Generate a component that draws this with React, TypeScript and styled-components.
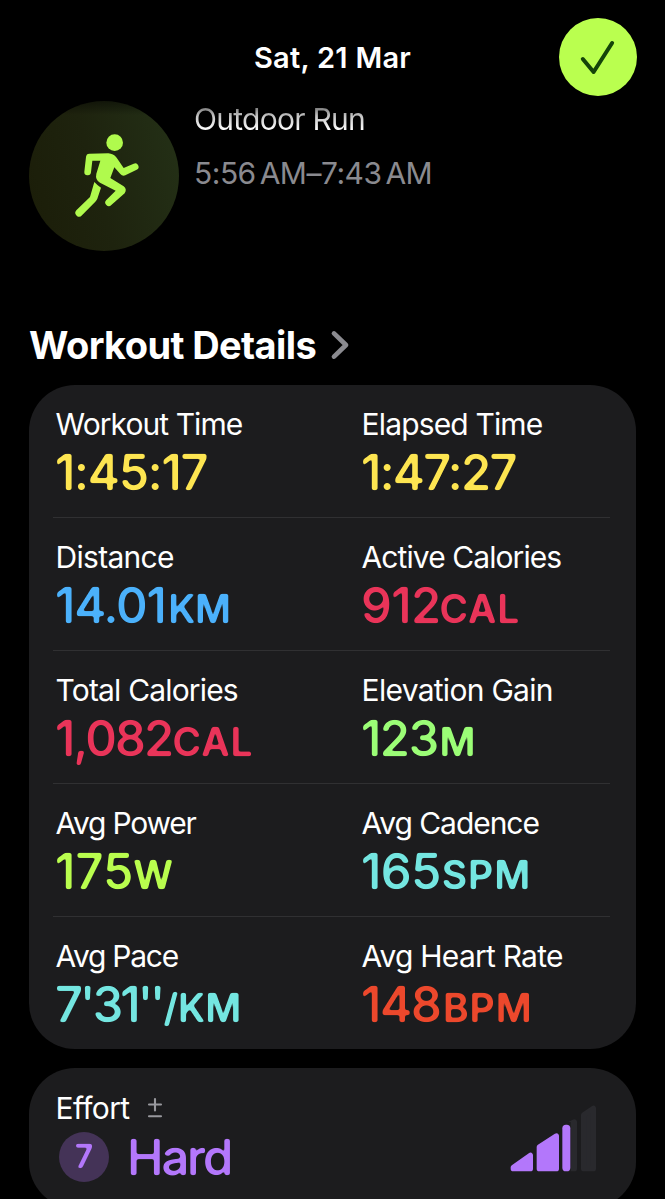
import React from "react";
import styled, { createGlobalStyle } from "styled-components";

const GlobalStyle = createGlobalStyle`
  * { box-sizing: border-box; }
  html, body { margin: 0; background: #000; }
  body {
    height: 1199px;
    overflow: hidden;
    font-family: Inter, "Liberation Sans", sans-serif;
    color: #fff;
    -webkit-font-smoothing: antialiased;
  }
`;

const Screen = styled.main`
  width: 665px;
  height: 1199px;
  overflow: hidden;
  background: #000;
`;

const Header = styled.header`
  display: grid;
  grid-template-columns: 78px 1fr 78px;
  align-items: center;
  height: 96px;
  padding: 18px 28px 0;
`;

const HeaderDate = styled.h1`
  grid-column: 2;
  margin: 1px 0 0;
  text-align: center;
  font-size: 29px;
  font-weight: 600;
  line-height: 36px;
  letter-spacing: 0.27px;
`;

const DoneButton = styled.button`
  display: block;
  width: 78px;
  height: 78px;
  padding: 0;
  border: 0;
  border-radius: 50%;
  background: #baff4f;
`;

const Drawing = styled.svg`
  display: block;
  flex: none;
`;

const Summary = styled.section`
  display: flex;
  gap: 15px;
  padding: 4.5px 29px 0;
`;

const ActivityBadge = styled.div`
  width: 150px;
  height: 150px;
  border-radius: 50%;
  background:
    linear-gradient(180deg, rgba(0, 0, 0, 0.45), rgba(0, 0, 0, 0) 14px),
    linear-gradient(75deg, #1b1d08 0%, #1e230e 45%, #243117 100%);
`;

const SummaryText = styled.div`
  display: flex;
  flex-direction: column;
  gap: 18px;
  font-size: 30px;
  line-height: 36px;
`;

const ActivityName = styled.div`
  align-self: flex-start;
  letter-spacing: -0.73px;
  color: transparent;
  background: linear-gradient(180deg, #777 6px, #c4c4c4 15px, #fff 29px);
  -webkit-background-clip: text;
  background-clip: text;
`;

const ActivityHours = styled.div`
  letter-spacing: -0.5px;
  word-spacing: -4px;
  color: #8a8a8f;
`;

const SectionTitle = styled.h2`
  display: flex;
  align-items: center;
  gap: 14px;
  margin: 71.5px 29px 17px;
  font-size: 38px;
  font-weight: 700;
  line-height: 46px;
  letter-spacing: -0.6px;
`;

const Card = styled.section`
  margin: 0 29px 19px;
  border-radius: 46px;
  background: #1c1c1e;
`;

const MetricsCard = styled(Card)`
  height: 664px;
  padding: 0 26px 0 24px;
`;

const MetricRow = styled.div`
  display: grid;
  grid-template-columns: 306px 1fr;
  height: 133px;
  padding: 21px 0 0 2px;
  border-bottom: 1px solid #303032;
  &:last-child { border-bottom: 0; }
`;

const Label = styled.div<{ $track: number }>`
  padding-left: 0.6px;
  font-size: 30px;
  line-height: 36px;
  white-space: nowrap;
  letter-spacing: ${(p) => p.$track + 0.06}px;
`;

const Value = styled.div<{ $color: string; $track: number }>`
  display: flex;
  align-items: baseline;
  height: 61px;
  padding-top: 1px;
  font-size: 49px;
  font-weight: 500;
  line-height: 60px;
  white-space: nowrap;
  color: ${(p) => p.$color};
  letter-spacing: ${(p) => p.$track}px;
  filter: url(#rounded);
`;

const Unit = styled.span<{ $track: number; $offset: number }>`
  margin-left: ${(p) => p.$offset}px;
  font-size: 39px;
  font-weight: 600;
  line-height: 1;
  letter-spacing: ${(p) => p.$track}px;
`;

const EffortCard = styled(Card)`
  display: flex;
  justify-content: space-between;
  align-items: flex-start;
  height: 140px;
  padding: 22px 39px 0 26px;
`;

const EffortHeading = styled.div`
  display: flex;
  align-items: center;
  gap: 18px;
`;

const EffortLevel = styled.div`
  display: flex;
  align-items: flex-start;
  gap: 18px;
  padding: 1px 0 0 4px;
`;

const Score = styled.div`
  display: grid;
  place-items: center;
  width: 50px;
  height: 50px;
  margin-top: 5px;
  border-radius: 50%;
  background: #443357;
  color: #b377fb;
  font-size: 32px;
  font-weight: 600;
  line-height: 50px;
`;

const ScoreDigit = styled.span`
  filter: url(#rounded);
`;

const EffortChart = styled.div`
  padding-top: 13.5px;
`;

type Metric = {
  label: string;
  labelTrack: number;
  value: string;
  track: number;
  color: string;
  unit?: string;
  unitTrack?: number;
  unitOffset?: number;
};

const rows: Metric[][] = [
  [
    { label: "Workout Time", labelTrack: -1.0, value: "1:45:17", track: -1.22, color: "#fde551" },
    { label: "Elapsed Time", labelTrack: -0.91, value: "1:47:27", track: -1.71, color: "#fde551" },
  ],
  [
    { label: "Distance", labelTrack: -0.77, value: "14.01", track: -1.13, color: "#4bb1fb", unit: "KM", unitTrack: -0.6, unitOffset: 2.6 },
    { label: "Active Calories", labelTrack: -0.98, value: "912", track: -0.6, color: "#e93459", unit: "CAL", unitTrack: 0.9, unitOffset: -1.2 },
  ],
  [
    { label: "Total Calories", labelTrack: -0.89, value: "1,082", track: -1.84, color: "#e93459", unit: "CAL", unitTrack: 0.9, unitOffset: 0.2 },
    { label: "Elevation Gain", labelTrack: -0.78, value: "123", track: -1.52, color: "#9bfd76", unit: "M", unitTrack: 0, unitOffset: 1.8 },
  ],
  [
    { label: "Avg Power", labelTrack: -1.28, value: "175", track: 0.07, color: "#b9fd4e", unit: "W", unitTrack: 0, unitOffset: 0 },
    { label: "Avg Cadence", labelTrack: -1.1, value: "165", track: -0.6, color: "#74e6e1", unit: "SPM", unitTrack: 0.99, unitOffset: 1 },
  ],
  [
    { label: "Avg Pace", labelTrack: -1.32, value: "7'31''", track: -2.94, color: "#74e6e1", unit: "/KM", unitTrack: -0.2, unitOffset: 1 },
    { label: "Avg Heart Rate", labelTrack: -0.82, value: "148", track: -1.25, color: "#ec482c", unit: "BPM", unitTrack: 0.9, unitOffset: 2.4 },
  ],
];

/* Softens the corners of letters and digits into rounded stroke ends. */
const RoundedFilter = () => (
  <svg width="0" height="0" style={{ display: "block" }} aria-hidden="true">
    <filter id="rounded" x="-5%" y="-5%" width="110%" height="110%" colorInterpolationFilters="sRGB">
      <feGaussianBlur stdDeviation="1.15" />
      <feComponentTransfer>
        <feFuncA type="linear" slope="3.2" intercept="-0.95" />
      </feComponentTransfer>
    </filter>
  </svg>
);

const CheckIcon = () => (
  <Drawing width="78" height="78" viewBox="0 0 78 78" fill="none" stroke="#144409" strokeWidth="4" strokeLinecap="round" strokeLinejoin="round">
    <path d="M23.8 41 34.6 54 53.1 25" />
  </Drawing>
);

const RunnerIcon = () => (
  <Drawing width="150" height="150" viewBox="87 62 450 450" fill="#b0fa4d">
    <circle cx="344" cy="187" r="25" />
    <path d="M268 220 325 219Q340 220 350 232L371 263 401 250a10 10 0 0 1 9 18L376 285Q367 288 361 281L343 261 331 293 371 318Q382 327 374 339L334 374a10.5 10.5 0 0 1-15-15L347 331 300 307Q285 298 289 280L301 241 277 241 273 276a9.5 9.5 0 0 1-20-2L258 230Q259 220 268 220Z" />
    <path d="M283 305Q292 315 303 322L292 355Q290 360 286 364L246 405a11 11 0 0 1-17-15L270 350Z" />
  </Drawing>
);

const ChevronIcon = () => (
  <Drawing width="20" height="30" viewBox="0 0 20 30" fill="none" stroke="#8b8b90" strokeWidth="4.7" strokeLinecap="round" strokeLinejoin="round">
    <path d="M4 3.4 16 15 4 26.6" />
  </Drawing>
);

const PlusMinusIcon = () => (
  <Drawing width="16" height="22" viewBox="0 0 16 22" fill="none" stroke="#98989d" strokeWidth="2.1" strokeLinecap="round">
    <path d="M8 2v11.5M2 7.5h12M2 19.3h12" />
  </Drawing>
);

const EffortBars = () => (
  <Drawing width="87" height="68.7" viewBox="90 160 261 206" strokeLinejoin="round" strokeWidth="16">
    <g fill="#29292d" stroke="#29292d">
      <path d="M311 193 340 173V354H311Z" />
      <path d="M262 224 283 214V354H262Z" />
    </g>
    <path d="M247 222Q252 218 258 214H272V362H247Z" fill="#1c1c1e" />
    <g fill="#b377fb" stroke="#b377fb">
      <path d="M100 350 151 314V354H100Z" />
      <path d="M178 289 229 256V354H178Z" />
    </g>
    <rect x="247" y="222" width="24" height="140" rx="11" fill="#b377fb" />
  </Drawing>
);

export default function App() {
  return (
    <>
      <GlobalStyle />
      <RoundedFilter />
      <Screen>
        <Header>
          <HeaderDate>Sat, 21 Mar</HeaderDate>
          <DoneButton aria-label="Done">
            <CheckIcon />
          </DoneButton>
        </Header>
        <Summary>
          <ActivityBadge>
            <RunnerIcon />
          </ActivityBadge>
          <SummaryText>
            <ActivityName>Outdoor Run</ActivityName>
            <ActivityHours>5:56 AM–7:43 AM</ActivityHours>
          </SummaryText>
        </Summary>
        <SectionTitle>
          Workout Details
          <ChevronIcon />
        </SectionTitle>
        <MetricsCard>
          {rows.map((row) => (
            <MetricRow key={row[0].label}>
              {row.map((m) => (
                <div key={m.label}>
                  <Label $track={m.labelTrack}>{m.label}</Label>
                  <Value $color={m.color} $track={m.track}>
                    {m.value}
                    {m.unit && (
                      <Unit $track={m.unitTrack ?? 0} $offset={m.unitOffset ?? 0}>
                        {m.unit}
                      </Unit>
                    )}
                  </Value>
                </div>
              ))}
            </MetricRow>
          ))}
        </MetricsCard>
        <EffortCard>
          <div>
            <EffortHeading>
              <Label $track={-0.72}>Effort</Label>
              <PlusMinusIcon />
            </EffortHeading>
            <EffortLevel>
              <Score>
                <ScoreDigit>7</ScoreDigit>
              </Score>
              <Value $color="#b377fb" $track={-2.1}>
                Hard
              </Value>
            </EffortLevel>
          </div>
          <EffortChart>
            <EffortBars />
          </EffortChart>
        </EffortCard>
      </Screen>
    </>
  );
}
